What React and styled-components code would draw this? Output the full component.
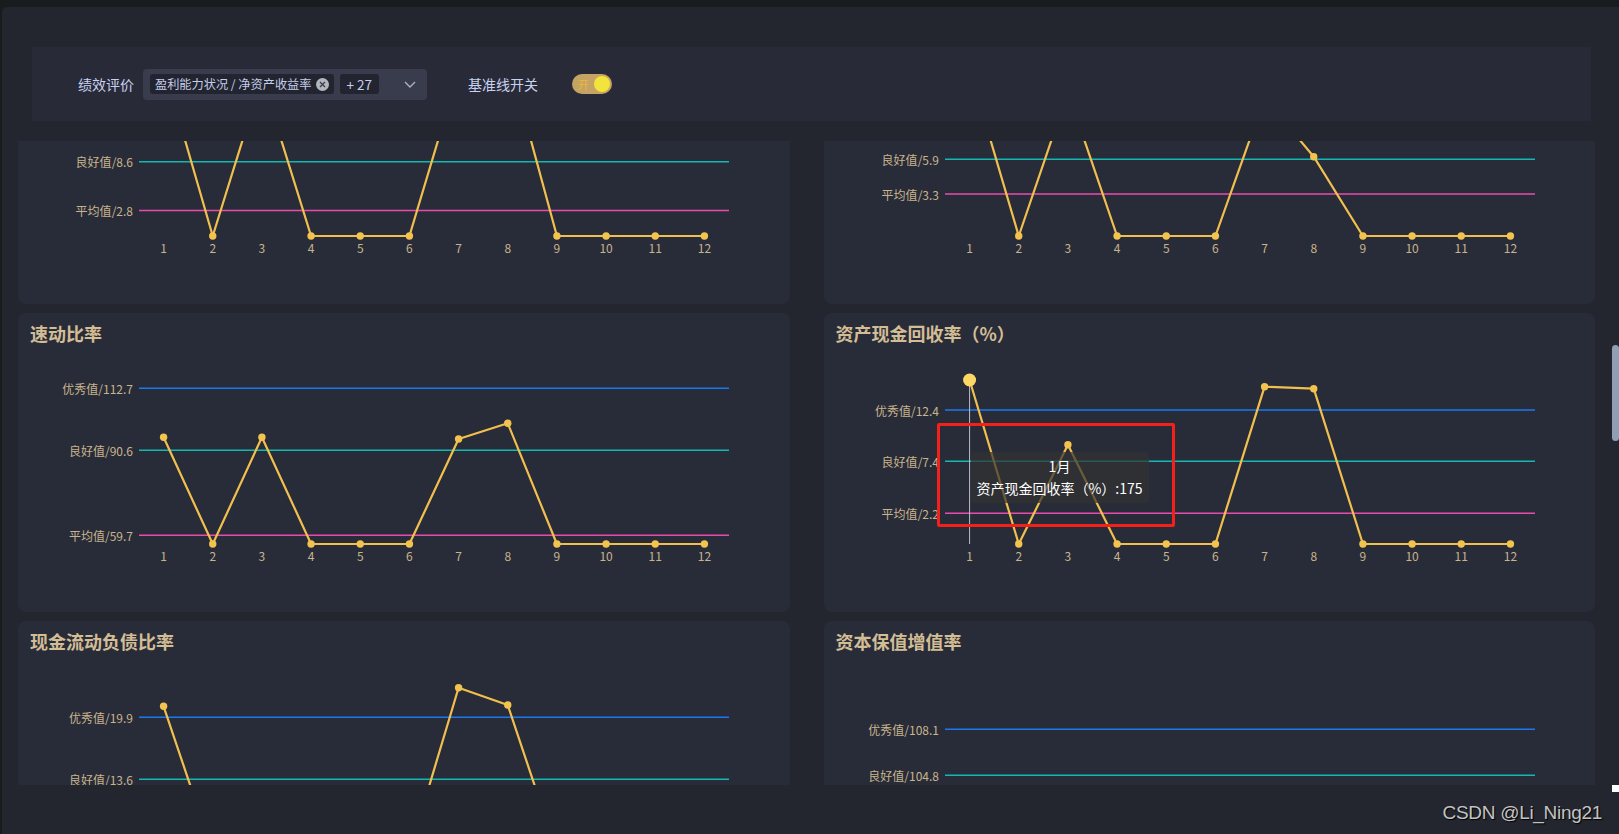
import React, { useLayoutEffect, useRef, useState } from 'react';
import styled, { createGlobalStyle } from 'styled-components';

const GlobalStyle = createGlobalStyle`
  html, body {
    margin: 0;
    padding: 0;
    background: #191c1e;
    overflow: hidden;
  }
  body {
    font-family: "Noto Sans CJK SC", "Noto Sans", sans-serif;
  }
  * { box-sizing: border-box; }
`;

// chart geometry, measured from the card's top-left corner
const GRID_LEFT = 121;
const GRID_RIGHT = 711;
const GRID_BOTTOM = 231;
const TITLE_H = 40;
const CARD_H = 299;
const ROW_GAP = 9;
const ROW_PITCH = CARD_H + ROW_GAP;
const STEP = (GRID_RIGHT - GRID_LEFT) / 12;
const xAt = (i) => GRID_LEFT + STEP * (i + 0.5);
const MONTHS = ['1', '2', '3', '4', '5', '6', '7', '8', '9', '10', '11', '12'];

const LINE_COLORS = {
  优秀值: '#1a78ee',
  良好值: '#13b8b1',
  平均值: '#e94bad',
};

const B = GRID_BOTTOM;

const generic = (title, n) => {
  const patterns = [
    [70, B, 85, B, B, B, 80, 60, B, B, B, B],
    [110, B, 120, B, B, B, 95, 100, B, B, B, B],
    [90, B, B, B, B, B, 70, 88, B, B, B, B],
    [B, B, 130, B, B, B, 75, 80, B, B, B, B],
  ];
  return {
    title,
    lines: [
      { name: '优秀值', value: (12.5 + n).toFixed(1), y: 92 },
      { name: '良好值', value: (8.2 + n / 2).toFixed(1), y: 148 },
      { name: '平均值', value: (3.1 + n / 4).toFixed(1), y: 202 },
    ],
    points: patterns[n % patterns.length],
  };
};

const CHARTS = [
  generic('净资产收益率', 0),
  generic('总资产报酬率', 1),
  generic('销售(营业)利润率', 2),
  generic('盈余现金保障倍数', 3),
  generic('成本费用利润率', 4),
  generic('资本收益率', 5),
  generic('总资产周转率', 6),
  generic('应收账款周转率', 7),
  {
    title: '不良资产比率',
    lines: [
      { name: '优秀值', value: '14.5', y: 109 },
      { name: '良好值', value: '8.6', y: 156.8 },
      { name: '平均值', value: '2.8', y: 205.5 },
    ],
    points: [61, B, 73, B, B, B, 67, 50, B, B, B, B],
  },
  {
    title: '流动资产周转率',
    lines: [
      { name: '优秀值', value: '8.5', y: 120 },
      { name: '良好值', value: '5.9', y: 154.3 },
      { name: '平均值', value: '3.3', y: 189 },
    ],
    points: [64, B, 87, B, B, B, 93, 151.7, B, B, B, B],
  },
  {
    title: '速动比率',
    lines: [
      { name: '优秀值', value: '112.7', y: 75.3 },
      { name: '良好值', value: '90.6', y: 137.3 },
      { name: '平均值', value: '59.7', y: 222.3 },
    ],
    points: [124.3, B, 124.3, B, B, B, 126, 110.3, B, B, B, B],
  },
  {
    title: '资产现金回收率（%）',
    lines: [
      { name: '优秀值', value: '12.4', y: 97 },
      { name: '良好值', value: '7.4', y: 148.3 },
      { name: '平均值', value: '2.2', y: 200.3 },
    ],
    points: [67, B, 131.7, B, B, B, 73.7, 75.7, B, B, B, B],
    active: 0,
    tooltip: { month: '1月', text: '资产现金回收率（%）:175' },
  },
  {
    title: '现金流动负债比率',
    lines: [
      { name: '优秀值', value: '19.9', y: 96.3 },
      { name: '良好值', value: '13.6', y: 158.3 },
      { name: '平均值', value: '8.1', y: 212 },
    ],
    points: [85.3, B, B, B, B, B, 66.7, 84, B, B, B, B],
  },
  {
    title: '资本保值增值率',
    lines: [
      { name: '优秀值', value: '108.1', y: 108.3 },
      { name: '良好值', value: '104.8', y: 154.3 },
      { name: '平均值', value: '100.2', y: 214 },
    ],
    points: [B, B, B, B, B, B, B, B, B, B, B, B],
  },
  generic('资产负债率', 8),
  generic('已获利息倍数', 9),
  generic('带息负债比率', 10),
  generic('或有负债比率', 11),
  generic('销售(营业)增长率', 12),
  generic('销售(营业)利润增长率', 13),
  generic('总资产增长率', 14),
  generic('技术投入比率', 15),
  generic('战略管理', 16),
  generic('发展创新', 17),
  generic('经营决策', 18),
  generic('风险控制', 19),
  generic('基础管理', 20),
  generic('人力资源', 21),
];

const TOTAL_ROWS = Math.ceil(CHARTS.length / 2);
const FIRST_ROW = 4;
const LAST_ROW = 6;
const SCROLL_TOP = FIRST_ROW * ROW_PITCH + 136;

const ChevronDown = () => (
  <svg width="12" height="7" viewBox="0 0 12 7">
    <polyline points="1,1 6,6 11,1" fill="none" stroke="#a9b1c7" strokeWidth="1.4" />
  </svg>
);

const CloseIcon = () => (
  <CloseDot>
    <svg width="7" height="7" viewBox="0 0 7 7">
      <path d="M1 1 L6 6 M6 1 L1 6" stroke="#3a3d4d" strokeWidth="1.3" />
    </svg>
  </CloseDot>
);

const TrendChart = ({ lines, points, active }) => {
  const poly = points.map((y, i) => `${xAt(i)},${y - TITLE_H}`).join(' ');
  return (
    <ChartSvg height={CARD_H - TITLE_H}>
      {lines.map((l) => (
        <g key={l.name}>
          <line
            x1={GRID_LEFT}
            x2={GRID_RIGHT}
            y1={l.y - TITLE_H}
            y2={l.y - TITLE_H}
            stroke={LINE_COLORS[l.name]}
            strokeWidth="1.4"
          />
          <AxisText x={GRID_LEFT - 6} y={l.y - TITLE_H} textAnchor="end" dominantBaseline="central">
            {l.name}/{l.value}
          </AxisText>
        </g>
      ))}
      {active != null && (
        <line
          x1={xAt(active)}
          x2={xAt(active)}
          y1={points[active] - TITLE_H}
          y2={GRID_BOTTOM - TITLE_H}
          stroke="#b9bdc7"
          strokeWidth="1"
        />
      )}
      <polyline points={poly} fill="none" stroke="#f1bf4d" strokeWidth="2.2" strokeLinejoin="round" />
      {points.map((y, i) => (
        <circle
          key={i}
          cx={xAt(i)}
          cy={y - TITLE_H}
          r={i === active ? 6.5 : 3.7}
          fill={i === active ? '#fcd766' : '#f3c34f'}
        />
      ))}
      {MONTHS.map((m, i) => (
        <AxisText key={m} x={xAt(i)} y={242.5 - TITLE_H} textAnchor="middle" dominantBaseline="central">
          {m}
        </AxisText>
      ))}
    </ChartSvg>
  );
};

const App = () => {
  const scrollRef = useRef(null);
  const [thumb, setThumb] = useState({ top: 0, height: 0 });

  useLayoutEffect(() => {
    const el = scrollRef.current;
    if (!el) return;
    el.scrollTop = SCROLL_TOP;
    const ratio = el.clientHeight / el.scrollHeight;
    setThumb({ top: el.scrollTop * ratio, height: el.clientHeight * ratio });
  }, []);

  const visible = CHARTS.slice(FIRST_ROW * 2, (LAST_ROW + 1) * 2);

  return (
    <Page>
      <GlobalStyle />
      <Panel>
        <HeaderWrap>
          <FilterBar>
            <FieldLabel>绩效评价</FieldLabel>
            <Select>
              <Tag>
                盈利能力状况 / 净资产收益率
                <CloseIcon />
              </Tag>
              <Tag $wide>+ 27</Tag>
              <Caret>
                <ChevronDown />
              </Caret>
            </Select>
            <FieldLabel $gap={41}>基准线开关</FieldLabel>
            <Switch>
              <SwitchText>开</SwitchText>
              <Knob />
            </Switch>
          </FilterBar>
        </HeaderWrap>

        <ScrollFrame>
          <ScrollArea ref={scrollRef}>
            <Spacer style={{ height: FIRST_ROW * ROW_PITCH }} />
            <CardGrid>
              {visible.map((c) => (
                <Card key={c.title}>
                  <CardTitle>{c.title}</CardTitle>
                  <TrendChart lines={c.lines} points={c.points} active={c.active} />
                  {c.tooltip && (
                    <>
                      <Tooltip>
                        <div>{c.tooltip.month}</div>
                        <div>{c.tooltip.text}</div>
                      </Tooltip>
                      <Highlight />
                    </>
                  )}
                </Card>
              ))}
            </CardGrid>
            <Spacer style={{ height: (TOTAL_ROWS - LAST_ROW - 1) * ROW_PITCH }} />
          </ScrollArea>
          <ScrollThumb style={{ top: thumb.top, height: thumb.height }} />
        </ScrollFrame>

        <Footer>
          <Watermark>CSDN @Li_Ning21</Watermark>
          <CornerMark />
        </Footer>
      </Panel>
    </Page>
  );
};

export default App;

const Page = styled.div`
  width: 100vw;
  height: 100vh;
  padding: 7px 0 0 2px;
  display: flex;
`;

const Panel = styled.div`
  flex: 1;
  min-width: 0;
  background: #23262f;
  border-radius: 5px 0 0 0;
  display: flex;
  flex-direction: column;
`;

const HeaderWrap = styled.div`
  padding: 40px 28px 20px 30px;
  flex: none;
`;

const FilterBar = styled.div`
  height: 74px;
  background: #282b37;
  display: flex;
  align-items: center;
  padding-left: 46px;
`;

const FieldLabel = styled.span`
  font-size: 14px;
  color: #c8d1f2;
  margin-left: ${(p) => (p.$gap ? `${p.$gap}px` : '0')};
  margin-right: 9px;
`;

const Select = styled.div`
  width: 284px;
  height: 31px;
  background: #393c4c;
  border-radius: 4px;
  display: flex;
  align-items: center;
  gap: 6px;
  padding: 0 7px;
`;

const Tag = styled.span`
  height: 20px;
  background: #22252f;
  border-radius: 3px;
  display: inline-flex;
  align-items: center;
  gap: 4px;
  padding: 0 ${(p) => (p.$wide ? '7px' : '5px')};
  font-size: ${(p) => (p.$wide ? '13.5px' : '12.2px')};
  color: #c5cdeb;
  white-space: pre;
`;

const CloseDot = styled.span`
  width: 13px;
  height: 13px;
  border-radius: 50%;
  background: #b3b6bc;
  display: inline-flex;
  align-items: center;
  justify-content: center;
`;

const Caret = styled.span`
  margin-left: auto;
  margin-right: 4px;
  display: flex;
`;

const Switch = styled.div`
  margin-left: 25px;
  width: 40px;
  height: 20px;
  border-radius: 10px;
  background: #c5a463;
  display: flex;
  align-items: center;
  justify-content: space-between;
  padding: 0 2px 0 6px;
`;

const SwitchText = styled.span`
  font-size: 11px;
  color: #eab645;
  line-height: 1;
`;

const Knob = styled.span`
  width: 16px;
  height: 16px;
  border-radius: 50%;
  background: #f3e33d;
`;

const ScrollFrame = styled.div`
  position: relative;
  height: 644px;
  flex: none;
`;

const ScrollArea = styled.div`
  height: 100%;
  overflow-y: auto;
  padding: 0 24px 0 16px;
  scrollbar-width: none;

  &::-webkit-scrollbar {
    display: none;
  }
`;

const ScrollThumb = styled.div`
  position: absolute;
  right: 0;
  width: 7px;
  background: #909fb4;
  border-radius: 4px;
`;

const Spacer = styled.div``;

const CardGrid = styled.div`
  display: grid;
  grid-template-columns: 1fr 1fr;
  grid-auto-rows: ${CARD_H}px;
  column-gap: 34px;
  row-gap: ${ROW_GAP}px;
  margin-bottom: ${ROW_GAP}px;
`;

const Card = styled.div`
  position: relative;
  background: #282c39;
  border-radius: 8px;
  overflow: hidden;
`;

const CardTitle = styled.div`
  height: ${TITLE_H}px;
  padding: 8px 12px 0;
  font-size: 18px;
  line-height: 24px;
  font-weight: 700;
  color: #d3bd95;
`;

const ChartSvg = styled.svg`
  display: block;
  width: 100%;
`;

const AxisText = styled.text`
  font-family: "Noto Sans CJK SC", "Noto Sans", sans-serif;
  font-size: 12px;
  fill: #c8b48c;
`;

const Tooltip = styled.div`
  position: absolute;
  left: 147px;
  top: 139px;
  width: 178px;
  padding: 4px 0;
  background: rgba(50, 50, 50, 0.7);
  border-radius: 4px;
  color: #ffffff;
  font-size: 14px;
  line-height: 21.5px;
  text-align: center;
  white-space: nowrap;
`;

const Highlight = styled.div`
  position: absolute;
  left: 113px;
  top: 110px;
  width: 238px;
  height: 104px;
  border: 3px solid #f4201a;
  border-radius: 2px;
`;

const Footer = styled.div`
  flex: 1;
  display: flex;
  justify-content: flex-end;
  align-items: flex-start;
`;

const Watermark = styled.span`
  margin-top: 17px;
  margin-right: 10px;
  font-family: "Liberation Sans", Arial, sans-serif;
  font-size: 19px;
  color: #c3c3c3;
  text-shadow: 1px 1px 1px #000;
  letter-spacing: -0.3px;
`;

const CornerMark = styled.span`
  width: 7px;
  height: 7px;
  background: #ffffff;
`;
